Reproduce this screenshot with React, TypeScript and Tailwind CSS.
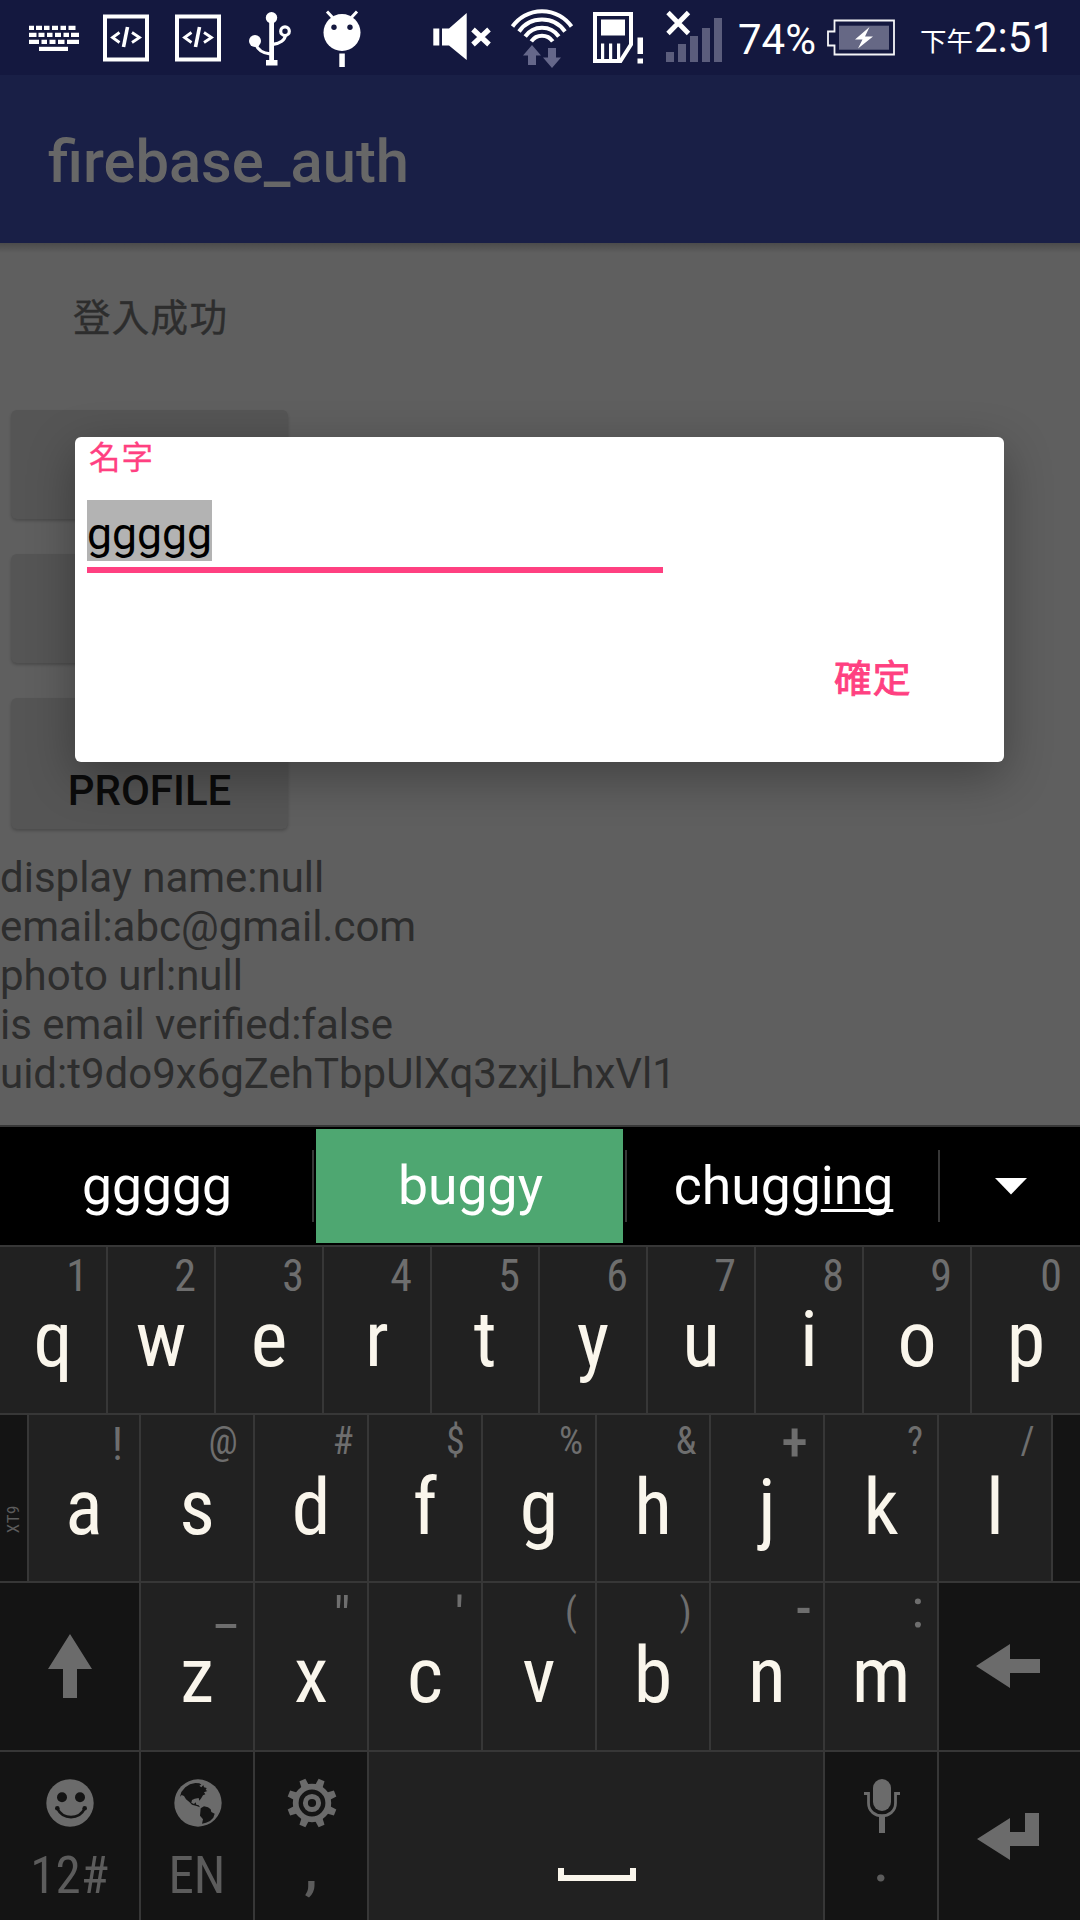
import React from "react";

type KeyDef = { k: string; hint: string; w: string; h: string };

const ROW1: KeyDef[] = "qwertyuiop".split("").map((k, i) => ({
  k,
  hint: String((i + 1) % 10),
  w: i === 9 ? "w-[108px]" : "w-[108px] border-r-2",
  h: "w-[58px] mt-[4px] text-[44px]",
}));

const SMALL = "mt-[1px] text-[38px]";

const ROW2: KeyDef[] = [
  { k: "a", hint: "!", w: "w-[112px] border-r-2", h: "w-[43px] mt-[4px] text-[46px]" },
  { k: "s", hint: "@", w: "w-[114px] border-r-2", h: "w-[60px] " + SMALL },
  { k: "d", hint: "#", w: "w-[114px] border-r-2", h: "w-[48px] " + SMALL },
  { k: "f", hint: "$", w: "w-[114px] border-r-2", h: "w-[51px] " + SMALL },
  { k: "g", hint: "%", w: "w-[114px] border-r-2", h: "w-[48px] " + SMALL },
  { k: "h", hint: "&", w: "w-[114px] border-r-2", h: "w-[46px] " + SMALL },
  { k: "j", hint: "+", w: "w-[114px] border-r-2", h: "w-[57px] mt-[2px] text-[54px] font-medium" },
  { k: "k", hint: "?", w: "w-[114px] border-r-2", h: "w-[44px] " + SMALL },
  { k: "l", hint: "/", w: "w-[114px] border-r-2", h: "w-[47px] " + SMALL },
];

const ROW3: KeyDef[] = [
  { k: "z", hint: "_", w: "w-[114px] border-r-2", h: "w-[54px] mt-[-2px] text-[54px]" },
  { k: "x", hint: '"', w: "w-[114px] border-r-2", h: "w-[50px] mt-[9px] text-[54px]" },
  { k: "c", hint: "'", w: "w-[114px] border-r-2", h: "w-[43px] mt-[9px] text-[54px]" },
  { k: "v", hint: "(", w: "w-[114px] border-r-2", h: "w-[48px] mt-[4px] text-[38px]" },
  { k: "b", hint: ")", w: "w-[114px] border-r-2", h: "w-[47px] mt-[4px] text-[38px]" },
  { k: "n", hint: "-", w: "w-[114px] border-r-2", h: "w-[39px] mt-[1px] text-[54px] font-medium" },
  { k: "m", hint: ":", w: "w-[114px] border-r-2", h: "w-[39px] mt-[1px] text-[54px]" },
];

function Key({ k, hint, w, h }: KeyDef) {
  return (
    <div className={"grid grid-cols-1 content-start h-full bg-[#212121] border-[#373737] " + w}>
      <span className={"col-start-1 row-start-1 justify-self-end h-[50px] leading-[50px] text-center text-[#6e6e6e] " + h}>{hint}</span>
      <span className="col-start-1 row-start-1 justify-self-center mt-[53px] h-[80px] leading-[80px] text-[78px] text-[#faf6ec]">{k}</span>
    </div>
  );
}

/* Shapes keep screen coordinates in the viewBox, so width and height equal its size. */
function Icon({ box, className, children }: { box: [number, number, number, number]; className?: string; children: React.ReactNode }) {
  return (
    <svg width={box[2]} height={box[3]} viewBox={box.join(" ")} className={"shrink-0 " + (className ?? "")}>
      {children}
    </svg>
  );
}

function CodeIcon({ className }: { className: string }) {
  return (
    <Icon box={[103, 14, 46, 48]} className={className}>
      <rect x="105" y="16.5" width="42" height="43" fill="none" stroke="#fff" strokeWidth="4" />
      <path d="M119.5 32.500L112.500 37.500L119.500 42.500M132 32.500L139.500 37.500L132 42.500" fill="none" stroke="#fff" strokeWidth="2.800" />
      <path d="M127.500 27L123.500 47" stroke="#fff" strokeWidth="3.600" />
    </Icon>
  );
}

function StatusBar() {
  return (
    <div className="flex h-[75px] items-start bg-[#14183f] text-white">
      <Icon box={[29, 25, 50, 27]} className="ml-[29px] mt-[25px]">
        <g stroke="#fff" strokeWidth="4.2" fill="none">
          <path d="M29 27.900H79" strokeDasharray="5 2 6 2 5.500 2.500 6 2.500 5.500 2.500 7 50" />
          <path d="M29 34.900H79" strokeDasharray="7.500 2 6 2.500 5.500 2.500 6 2.500 5.500 2 8 50" />
          <path d="M29 41.900H79" strokeDasharray="10 2.500 5.500 2.500 6 2.500 6.500 2.500 12 50" />
          <path d="M39 48.900H68" />
        </g>
      </Icon>
      <CodeIcon className="ml-[24px] mt-[14px]" />
      <CodeIcon className="ml-[26px] mt-[14px]" />
      <Icon box={[248, 11, 44, 56]} className="ml-[27px] mt-[11px]">
        <g fill="#fff">
          <circle cx="271.500" cy="17.700" r="5.700" />
          <rect x="269.200" y="18" width="4.800" height="43" />
          <rect x="266" y="60" width="11.500" height="5.500" />
          <circle cx="255" cy="41" r="6" />
        </g>
        <g fill="none" stroke="#fff" strokeWidth="3.200">
          <path d="M255.500 44C258 50 263 53.500 270 53.800M273 44.300C280 43.500 285 40 285.500 35" />
          <circle cx="285" cy="31.200" r="4.300" />
        </g>
      </Icon>
      <Icon box={[322, 9, 40, 60]} className="ml-[30px] mt-[9px]">
        <circle cx="342" cy="32.500" r="18.500" fill="#fff" />
        <path d="M327 11.500L334 19M357 11.500L350 19" stroke="#fff" strokeWidth="3" />
        <circle cx="334" cy="27.300" r="2.700" fill="#14183f" />
        <circle cx="350" cy="27.300" r="2.700" fill="#14183f" />
        <rect x="339.300" y="53.500" width="5.500" height="13.500" fill="#fff" />
      </Icon>
      <Icon box={[432, 12, 60, 50]} className="ml-[70px] mt-[12px]">
        <path d="M433.300 28.500h6v17h-6zM442 28.500H449L466.700 13V60L449 45.500H442z" fill="#fff" />
        <path d="M473 29.500L489 44.500M489 29.500L473 44.500" stroke="#fff" strokeWidth="5.200" />
      </Icon>
      <Icon box={[510, 6, 64, 63]} className="ml-[18px] mt-[6px]">
        <g fill="none" stroke="#fff" strokeWidth="4">
          <path d="M512.500 26.500A36 36 0 0 1 571.500 26.500" />
          <path d="M519 31.500A28 28 0 0 1 565 31.500" />
          <path d="M525.200 36.500A20.500 20.500 0 0 1 558.800 36.500" />
          <path d="M531.300 41.300A13 13 0 0 1 552.700 41.300" />
        </g>
        <path d="M532 45L541 55.500H536V65H528V55.500H523zM552 68L561 57.500H556V48H548V57.500H543z" fill="#65678a" />
      </Icon>
      <Icon box={[592, 11, 53, 53]} className="ml-[18px] mt-[11px]">
        <path d="M595 14H631V44.500L620.500 61H595z" fill="none" stroke="#fff" strokeWidth="4" />
        <path d="M601 19.500h24v16h-24zM601 43.500h3.200v17h-3.200zM609 43.500h3.200v17h-3.200zM617 43.500h3.200v17h-3.200zM637.500 37.500h5.500v16.500h-5.500zM637.500 58.500h5.500v5h-5.500z" fill="#fff" />
      </Icon>
      <Icon box={[664, 10, 60, 53]} className="ml-[19px] mt-[10px]">
        <path d="M666 52h8v10h-8zM678 44h8v18h-8zM690 36h8v26h-8zM702 28h8v34h-8zM714 18h8v44h-8z" fill="#5b5d7c" />
        <path d="M668 12.500L688.500 33.500M688.500 12.500L668 33.500" stroke="#fff" strokeWidth="4.800" />
      </Icon>
      <span className="ml-[14px] mt-[15px] h-[50px] w-[89px] whitespace-nowrap text-[42px] leading-[50px]">74%</span>
      <Icon box={[827, 19, 69, 37]} className="mt-[19px]">
        <path d="M834.500 20.500H894V54.500H834.500V45.500H828V31.500H834.500z" fill="none" stroke="#f5f5f8" strokeWidth="1.800" />
        <rect x="839" y="25.700" width="50" height="24" fill="#666885" />
        <path d="M869.500 27L855 39.500H862.500L858 48.500L873 36.500H865z" fill="#fff" />
      </Icon>
      <span className="ml-[24px] mt-[20px] h-[40px] w-[54px] whitespace-nowrap font-['Noto_Sans_CJK_TC',sans-serif] text-[26.500px] leading-[40px]">下午</span>
      <span className="mt-[13px] h-[50px] whitespace-nowrap text-[42px] leading-[50px]">2:51</span>
    </div>
  );
}

function Content() {
  return (
    <div className="flex h-[882px] flex-col bg-[#5f5f5f]">
      <div className="h-[10px] shrink-0 bg-gradient-to-b from-[#4b4b4b] to-[#5f5f5f]" />
      <p className="ml-[73px] mt-[32px] h-[60px] shrink-0 font-['Noto_Sans_CJK_TC',sans-serif] text-[37.500px] leading-[60px] tracking-[1.300px] text-[#2d2d2d] [-webkit-text-stroke:0.4px_#2d2d2d]">登入成功</p>
      <div className="ml-[11px] mt-[65px] flex w-[277px] shrink-0 flex-col gap-[35px]">
        <div className="h-[109px] rounded-[6px] bg-[#555555] shadow-[0_2px_3px_rgba(0,0,0,0.2)]" />
        <div className="h-[109px] rounded-[6px] bg-[#555555] shadow-[0_2px_3px_rgba(0,0,0,0.2)]" />
        <div className="h-[131px] rounded-[6px] bg-[#555555] pt-[68px] text-center text-[42px] font-medium leading-[50px] text-[#0b0b0b] shadow-[0_2px_3px_rgba(0,0,0,0.2)]">PROFILE</div>
      </div>
      <div className="mt-[24px] whitespace-pre text-[42px] leading-[49px] text-[#2d2d2d]">
        {"display name:null\nemail:abc@gmail.com\nphoto url:null\nis email verified:false\nuid:t9do9x6gZehTbpUlXq3zxjLhxVl1"}
      </div>
    </div>
  );
}

function Dialog() {
  return (
    <div className="absolute left-[75px] top-[437px] flex h-[325px] w-[929px] flex-col rounded-[6px] bg-white shadow-[0_14px_48px_rgba(0,0,0,0.32)]">
      <label className="ml-[14px] mt-[-2px] h-[40px] font-['Noto_Sans_CJK_TC',sans-serif] text-[31.500px] leading-[40px] tracking-[1px] text-[#ff4081] [-webkit-text-stroke:0.3px_#ff4081]">名字</label>
      <div className="ml-[12px] mt-[25px] w-[576px] border-b-[6px] border-[#ff4081] pb-[6px]">
        <span className="block h-[61px] w-[125px] whitespace-nowrap bg-[#b3b3b3] pt-[4px] text-[44.500px] leading-[57px] text-black">
          <span className="block pt-[2px]">ggggg</span>
        </span>
      </div>
      <button className="ml-[759px] mt-[73px] h-[60px] w-[80px] text-left font-['Noto_Sans_CJK_TC',sans-serif] text-[37.800px] leading-[60px] tracking-[1px] text-[#ff4081] [-webkit-text-stroke:0.9px_#ff4081]">確定</button>
    </div>
  );
}

function Suggestions() {
  const text = "flex items-center justify-center text-[53.500px] text-white h-[114px] pl-[2px]";
  return (
    <div className="flex h-[122px] items-center border-y-2 border-[#373737] bg-black">
      <div className={text + " w-[312px]"}>ggggg</div>
      <div className="mr-[2px] h-[72px] w-[2px] bg-[#373737]" />
      <div className={text + " w-[307px] bg-[#4ea771]"}>buggy</div>
      <div className="ml-[2px] h-[72px] w-[2px] bg-[#373737]" />
      <div className={text + " w-[311px]"}>
        <span>
          chugg<span className="underline decoration-[3px] underline-offset-[5px] [text-decoration-skip-ink:none]">ing</span>
        </span>
      </div>
      <div className="h-[72px] w-[2px] bg-[#373737]" />
      <Icon box={[995, 1180, 32, 17]} className="ml-[55px]">
        <path d="M995 1180H1027L1011 1196.500z" fill="#fff" />
      </Icon>
    </div>
  );
}

function Keyboard() {
  const row = "flex h-[168px] border-b-2 border-[#373737] ";
  return (
    <div className="flex h-[795px] flex-col bg-[#141414]">
      <Suggestions />
      <div className="font-['Roboto_Condensed',Roboto,sans-serif] [font-stretch:condensed]">
        <div className={row}>{ROW1.map((d) => <Key key={d.k} {...d} />)}</div>
        <div className={row}>
          <div className="flex w-[29px] items-center justify-center border-r-2 border-[#373737] pr-[2px] pt-[43px]">
            <span className="rotate-180 text-[17px] leading-[20px] tracking-[0.500px] text-[#5c5c5c] [writing-mode:vertical-rl]">XT9</span>
          </div>
          {ROW2.map((d) => <Key key={d.k} {...d} />)}
        </div>
        <div className="flex h-[169px] border-b-2 border-[#373737]">
          <div className="w-[141px] border-r-2 border-[#373737]">
            <Icon box={[48, 1634, 44, 64]} className="ml-[48px] mt-[51px]">
              <path d="M70 1634L92 1669H77V1698H63V1669H48z" fill="#6b6b6b" />
            </Icon>
          </div>
          {ROW3.map((d) => <Key key={d.k} {...d} />)}
          <Icon box={[976, 1644, 64, 44]} className="ml-[37px] mt-[61px]">
            <path d="M976 1666L1010 1644V1659H1040V1673H1010V1688z" fill="#6b6b6b" />
          </Icon>
        </div>
        <div className="flex h-[168px] text-[51px] leading-[60px] text-[#5c5c5c]">
          <div className="flex w-[141px] flex-col items-center border-r-2 border-[#373737] pt-[27px]">
            <Icon box={[45, 1779, 48, 48]}>
              <circle cx="69" cy="1803" r="23.700" fill="#6b6b6b" />
              <g fill="#141414">
                <circle cx="61" cy="1797.300" r="5" />
                <circle cx="79" cy="1797.300" r="5" />
                <circle cx="56.300" cy="1808.300" r="2.300" />
                <circle cx="83.700" cy="1808.300" r="2.300" />
              </g>
              <path d="M56.300 1808.500C62 1820 78 1820 83.700 1808.500" fill="none" stroke="#141414" strokeWidth="2.800" />
            </Icon>
            <span className="mt-[19px]">12#</span>
          </div>
          <div className="flex w-[114px] flex-col items-center border-r-2 border-[#373737] pt-[27px]">
            <svg width="48" height="48" viewBox="432 27 144 144" className="ml-[2px]">
              <circle cx="504" cy="99" r="71" fill="#6b6b6b" />
              <path d="M450 80L454 66L466 52L480 43L496 39L508 40L514 44L508 47L514 52L520 45L522 52L530 54L527 60L532 63L522 67L526 73L519 76L514 84L508 92L506 84L494 86L486 90L484 98L492 102L497 97L499 104L506 106L510 112L500 108L486 104L478 96L468 88L462 78L455 75z" fill="#141414" />
              <path d="M512 115L522 109L534 112L542 118L544 126L554 131L550 143L540 153L528 158L516 161L519 148L510 137z" fill="#141414" />
            </svg>
            <span className="mt-[19px]">EN</span>
          </div>
          <div className="flex w-[114px] flex-col items-center border-r-2 border-[#373737] pt-[27px]">
            <svg width="48" height="48" viewBox="-24 -24 48 48" className="ml-[2px] overflow-visible">
              <g fill="#6b6b6b">
                {[22.5, 67.5, 112.5, 157.5, 202.5, 247.5, 292.5, 337.5].map((a) => (
                  <path key={a} d="M-3.200 -25H3.200L4 -17H-4z" transform={`rotate(${a})`} />
                ))}
              </g>
              <circle r="16.300" fill="none" stroke="#6b6b6b" strokeWidth="5.800" />
              <circle r="6.600" fill="none" stroke="#6b6b6b" strokeWidth="5" />
            </svg>
            <span className="mt-[11px] text-[60px] font-medium">,</span>
          </div>
          <div className="flex w-[456px] justify-center border-r-2 border-[#373737] bg-[#212121] pl-[2px] pt-[116px]">
            <div className="h-[13px] w-[78px] border-x-[6px] border-b-[6px] border-[#faf6ec]" />
          </div>
          <div className="flex w-[114px] flex-col items-center border-r-2 border-[#373737] pt-[27px]">
            <Icon box={[864, 1779, 36, 54]} className="ml-[2px]">
              <rect x="873" y="1779" width="18" height="32" rx="9" fill="#6b6b6b" />
              <path d="M864 1793.500H868.500V1803C868.500 1820 895.500 1820 895.500 1803V1793.500H900" fill="none" stroke="#6b6b6b" strokeWidth="2.800" />
              <rect x="879" y="1816" width="6" height="17" fill="#6b6b6b" />
            </Icon>
            <span className="mt-0 text-[54px] font-medium">.</span>
          </div>
          <Icon box={[977, 1813, 62, 47]} className="ml-[38px] mt-[61px]">
            <path d="M977 1839L1010 1818V1832H1025V1813H1039V1846H1010V1860z" fill="#6b6b6b" />
          </Icon>
        </div>
      </div>
    </div>
  );
}

export default function App() {
  return (
    <div className="relative flex h-[1920px] w-[1080px] flex-col overflow-hidden font-[Roboto,sans-serif]">
      <StatusBar />
      <header className="flex h-[168px] items-center bg-[#191f46] pl-[48px] pt-[5px] text-[59.700px] font-medium leading-[70px] text-[#676767]">firebase_auth</header>
      <Content />
      <Keyboard />
      <Dialog />
    </div>
  );
}
